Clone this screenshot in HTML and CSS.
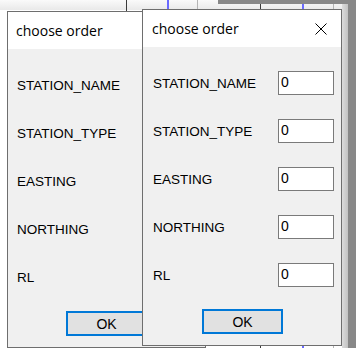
FILE: index.html
```html
<!DOCTYPE html>
<html>
	<head>
		<title>choose order</title>
		<meta charset="UTF-8"/>
		<link rel="stylesheet" href="styles.css">
	</head>
	<body>
		<div class="desk">
			<!-- sheet behind the dialogs -->
			<div class="header"></div>
			<div class="line dark" style="left:126px"></div>
			<div class="line blue" style="left:167px"></div>
			<div class="line light" style="left:197px"></div>
			<div class="line dark" style="left:260px"></div>
			<div class="line blue" style="left:302px"></div>
			<div class="line light" style="left:333px"></div>
			<div class="darkTop"></div>
			<div class="shade"></div>
			<div class="darkSide"></div>

			<div class="dialog back">
				<div class="titlebar">
					<span class="title">choose order</span>
					<svg class="close" width="12" height="12" viewBox="0 0 12 12"><path d="M0.5 0.5L11.5 11.5M11.5 0.5L0.5 11.5" stroke="#000" stroke-width="1" fill="none"/></svg>
				</div>
				<div class="content">
					<div class="fields">
						<div class="row"><span class="label">STATION_NAME</span><input class="field" value="0"/></div>
						<div class="row"><span class="label">STATION_TYPE</span><input class="field" value="0"/></div>
						<div class="row"><span class="label">EASTING</span><input class="field" value="0"/></div>
						<div class="row"><span class="label">NORTHING</span><input class="field" value="0"/></div>
						<div class="row"><span class="label">RL</span><input class="field" value="0"/></div>
					</div>
					<div class="actions"><button class="ok">OK</button></div>
				</div>
			</div>

			<div class="dialog front">
				<div class="titlebar">
					<span class="title">choose order</span>
					<svg class="close" width="12" height="12" viewBox="0 0 12 12"><path d="M0.5 0.5L11.5 11.5M11.5 0.5L0.5 11.5" stroke="#000" stroke-width="1" fill="none"/></svg>
				</div>
				<div class="content">
					<div class="fields">
						<div class="row"><span class="label">STATION_NAME</span><input class="field" value="0"/></div>
						<div class="row"><span class="label">STATION_TYPE</span><input class="field" value="0"/></div>
						<div class="row"><span class="label">EASTING</span><input class="field" value="0"/></div>
						<div class="row"><span class="label">NORTHING</span><input class="field" value="0"/></div>
						<div class="row"><span class="label">RL</span><input class="field" value="0"/></div>
					</div>
					<div class="actions"><button class="ok">OK</button></div>
				</div>
			</div>
		</div>
	</body>
</html>
```

FILE: styles.css
```css
html, body {
	margin: 0;
	padding: 0;
	background: #ffffff;
}

/* the app window behind */
.desk {
	position: relative;
	width: 356px;
	height: 348px;
	overflow: hidden;
	background: #ffffff;
}

.header {
	position: absolute;
	left: 0;
	top: 0;
	width: 356px;
	height: 10px;
	background: linear-gradient(#fafafa, #e9e9e9);
}

.line {
	position: absolute;
	top: 0;
	width: 1px;
	height: 348px;
}
.dark { background: #3a3a3a; }
.blue { background: #6a6aff; width: 2px; }
.light { background: #b4b4b4; }

.darkTop {
	position: absolute;
	left: 218px;
	top: 0;
	width: 138px;
	height: 4px;
	background: #888888;
}

.shade {
	position: absolute;
	left: 342px;
	top: 4px;
	width: 6px;
	height: 344px;
	background: linear-gradient(90deg, #dcdcdc, #c2c2c2);
}

.darkSide {
	position: absolute;
	left: 348px;
	top: 0;
	width: 8px;
	height: 348px;
	background: #888888;
}

/* dialogs */
.dialog {
	position: absolute;
	width: 199px;
	height: 337px;
	box-sizing: border-box;
	border: 1px solid #6e6e6e;
	background: #f0f0f0;
	display: flex;
	flex-direction: column;
}
.back { left: 7px; top: 11px; }
.front { left: 142px; top: 9px; width: 200px; }
.front .titlebar { padding-left: 9px; }
.front .content { padding-left: 10px; }

.titlebar {
	height: 37px;
	flex: none;
	background: #ffffff;
	display: flex;
	align-items: center;
	justify-content: space-between;
	padding: 0 14px 0 8px;
}

.title {
	font-family: "Segoe UI", "Open Sans", sans-serif;
	font-size: 14px;
	color: #000;
}

.close {
	display: block;
}

.content {
	flex: 1;
	display: flex;
	flex-direction: column;
	padding: 24px 7px 0 9px;
}

.fields {
	display: flex;
	flex-direction: column;
	gap: 24px;
}

.row {
	height: 24px;
	display: flex;
	align-items: center;
	justify-content: space-between;
}

.label {
	font-family: "Liberation Sans", Arial, sans-serif;
	font-size: 13.5px;
	color: #000;
}

.field {
	width: 56px;
	height: 24px;
	box-sizing: border-box;
	margin: 0;
	border: 1px solid #7a7a7a;
	background: #fff;
	padding: 0 2px 3px 2px;
	font-family: "Liberation Sans", Arial, sans-serif;
	font-size: 14px;
	color: #000;
	outline: none;
}

.actions {
	padding-top: 22px;
	display: flex;
	justify-content: center;
	margin-left: -2px;
}

.ok {
	width: 81px;
	height: 25px;
	box-sizing: border-box;
	border: 2px solid #0078d7;
	background: #e1e1e1;
	font-family: "Liberation Sans", Arial, sans-serif;
	font-size: 14px;
	color: #000;
	padding: 0;
}
```
